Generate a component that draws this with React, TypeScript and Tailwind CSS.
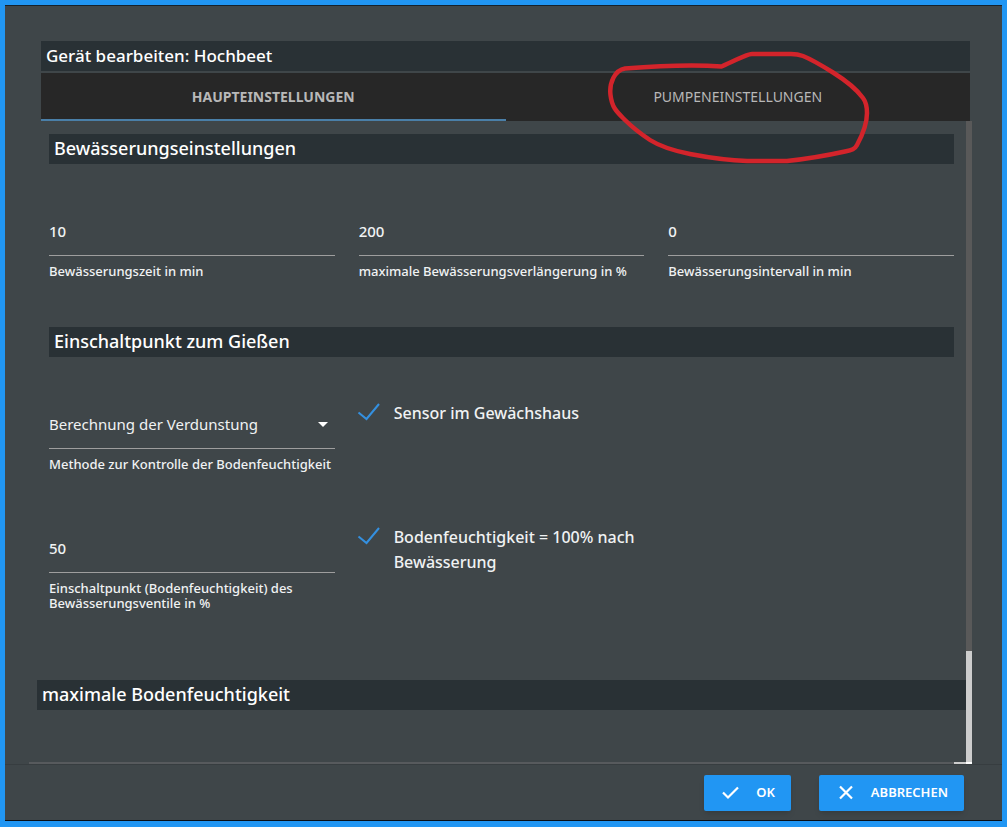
import { useState } from 'react'
import type { ReactNode } from 'react'

const tabs = ['Haupteinstellungen', 'Pumpeneinstellungen']

function SectionTitle({ children }: { children: ReactNode }) {
  return (
    <h2 className="h-[30px] bg-[#293135] pl-[5px] text-lg leading-7 font-medium text-white">{children}</h2>
  )
}

function NumberField({ id, label, value }: { id: string; label: string; value: string }) {
  return (
    <div className="flex min-w-0 flex-col">
      <input
        id={id}
        type="text"
        inputMode="numeric"
        defaultValue={value}
        className="h-12 w-full border-b border-[#9e9e9e] bg-transparent pb-0.5 text-[15px] font-medium outline-none focus:border-[#2196f3]"
      />
      <label htmlFor={id} className="pt-2 text-[13px] leading-[15px] font-medium">
        {label}
      </label>
    </div>
  )
}

function CheckField({ id, label }: { id: string; label: string }) {
  const [checked, setChecked] = useState(true)

  return (
    <label htmlFor={id} className="flex min-w-0 cursor-pointer items-start text-base leading-[25px] font-medium">
      <input
        id={id}
        type="checkbox"
        checked={checked}
        onChange={(e) => setChecked(e.target.checked)}
        className="peer sr-only"
      />
      <svg
        viewBox="0 0 22 25"
        className="h-[25px] w-[22px] shrink-0 overflow-visible opacity-0 peer-checked:opacity-100"
        fill="none"
      >
        <path d="M-0.5 11.5L7.5 18L20 3" stroke="#3490e0" strokeWidth="2" />
      </svg>
      <span className="pl-[13px]">{label}</span>
    </label>
  )
}

export default function App() {
  const [activeTab, setActiveTab] = useState(0)

  return (
    <div className="flex min-h-screen flex-col border-5 border-b-6 border-[#2196f3] bg-[#3f4649] font-['Noto_Sans','Open_Sans',sans-serif] text-[#f0f2f3]">
      <div className="flex flex-1 flex-col border-t border-b border-t-[#16222c] border-b-[#0b1016]">
        <header className="pt-[35px] pr-8 pl-9">
          <h1 className="mb-0.5 h-[30px] bg-[#293135] pl-[5px] text-[17px] leading-[30px] font-medium text-white">
            Gerät bearbeiten: Hochbeet
          </h1>
          <div role="tablist" className="grid h-12 grid-cols-2 bg-[#272727]">
            {tabs.map((tab, i) => (
              <button
                key={tab}
                role="tab"
                aria-selected={activeTab === i}
                onClick={() => setActiveTab(i)}
                className={`border-b-2 pt-0.5 text-sm uppercase ${
                  activeTab === i ? 'border-[#4a7fa8] font-bold text-[#b8b8b8]' : 'border-transparent text-[#b8b8b8]'
                }`}
              >
                {tab}
              </button>
            ))}
          </div>
        </header>

        <main className="mr-[30px] ml-6 flex flex-1">
          <div className="flex flex-1 flex-col">
            <div className="flex-1">
              <section className="pt-[13px] pr-3 pl-5">
                <SectionTitle>Bewässerungseinstellungen</SectionTitle>
                <div className="grid grid-cols-3 gap-6 pt-11">
                  <NumberField id="duration" label="Bewässerungszeit in min" value="10" />
                  <NumberField id="extension" label="maximale Bewässerungsverlängerung in %" value="200" />
                  <NumberField id="interval" label="Bewässerungsintervall in min" value="0" />
                </div>
              </section>

              <section className="pt-12 pr-3 pl-5">
                <SectionTitle>Einschaltpunkt zum Gießen</SectionTitle>
                <div className="grid grid-cols-3 gap-x-6 gap-y-[53px] pt-11">
                  <div className="flex min-w-0 flex-col">
                    <div className="flex h-12 items-center border-b border-[#9e9e9e]">
                      <select
                        id="method"
                        className="h-full flex-1 appearance-none bg-transparent text-[15px] outline-none"
                      >
                        <option>Berechnung der Verdunstung</option>
                      </select>
                      <svg viewBox="0 0 10 5" className="mr-[7px] h-[5px] w-2.5" fill="#fff">
                        <path d="M0 0h10L5 5z" />
                      </svg>
                    </div>
                    <label htmlFor="method" className="pt-2 text-[13px] leading-[15px] font-medium">
                      Methode zur Kontrolle der Bodenfeuchtigkeit
                    </label>
                  </div>
                  <CheckField id="greenhouse" label="Sensor im Gewächshaus" />
                  <div className="col-start-1">
                    <NumberField
                      id="threshold"
                      label="Einschaltpunkt (Bodenfeuchtigkeit) des Bewässerungsventile in %"
                      value="50"
                    />
                  </div>
                  <CheckField id="saturate" label="Bodenfeuchtigkeit = 100% nach Bewässerung" />
                </div>
              </section>

              <section className="pt-[69px] pl-2">
                <SectionTitle>maximale Bodenfeuchtigkeit</SectionTitle>
              </section>
            </div>
            {/* horizontal scrollbar */}
            <div className="flex h-0.5 justify-end bg-[#575a5d]">
              <div className="w-3 bg-[#cdcdcd]" />
            </div>
          </div>
          {/* vertical scrollbar */}
          <div className="flex w-1.5 flex-col justify-end bg-[#595959]">
            <div className="h-[111px] bg-[#cdcdcd]" />
            <div className="h-0.5 bg-white" />
          </div>
        </main>

        <footer className="flex justify-end gap-7 border-t border-[#373d40] pt-2.5 pr-[38px] pb-[9px]">
          <button className="flex h-9 items-center rounded-xs bg-[#2196f3] pr-4 pl-[18px] text-[13px] font-semibold text-white uppercase shadow-md">
            <svg viewBox="0 0 18 18" className="mr-4 h-[18px] w-[18px]" fill="none" stroke="currentColor" strokeWidth="2.2">
              <path d="M1 8.5L6 13.500L16 3.500" />
            </svg>
            Ok
          </button>
          <button className="flex h-9 items-center rounded-xs bg-[#2196f3] pr-4 pl-[18px] text-[13px] font-semibold text-white uppercase shadow-md">
            <svg viewBox="0 0 18 18" className="mr-4 h-[18px] w-[18px]" fill="none" stroke="currentColor" strokeWidth="2.2">
              <path d="M3 2.500L15 14.500M15 2.500L3 14.500" />
            </svg>
            Abbrechen
          </button>
        </footer>
      </div>

      {/* hand-drawn marker around the second tab */}
      <svg
        viewBox="0 0 264 116"
        className="pointer-events-none absolute top-[50px] left-[607px] h-[116px] w-[264px]"
        fill="none"
        stroke="#d3242b"
        strokeWidth="4.5"
        strokeLinecap="round"
        strokeLinejoin="round"
      >
        <path d="M114.500 16.500C85 14.500 50 16 18 18.500C8 20 2 33 3.500 45C5 58 10 62 18 70C26 78 34 84 43 90C54 97 68 101 83 104C104 108 122 110.500 140 111H180C204 108.500 222 105 238 101.500C245 100 248 99 250 95C256 84 260 74 260 63C260 56 259 52 256 48C248 37 238 30 226 22.500C214 15 206 10 196 6C192 4.500 188 4 184 4H145C139 4 130 10 114.500 16.500" />
      </svg>
    </div>
  )
}
